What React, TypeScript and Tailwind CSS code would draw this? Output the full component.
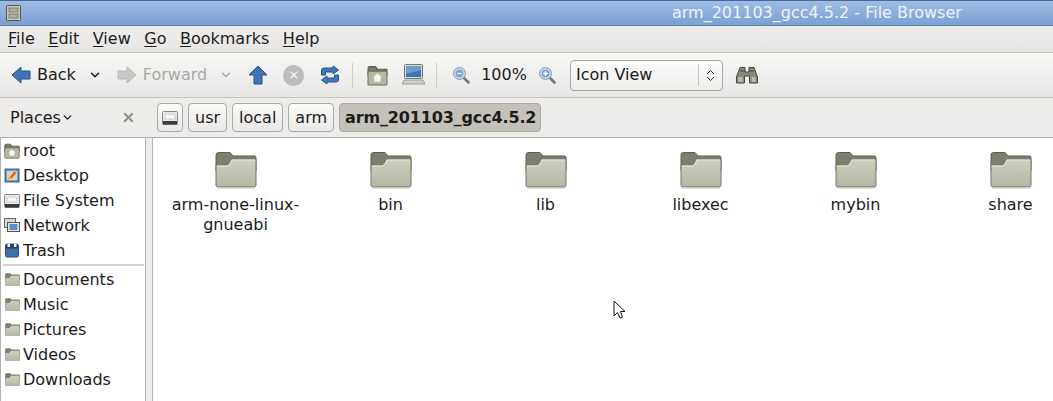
import { useId } from 'react';
import { ChevronDown, ChevronsUpDown, X } from 'lucide-react';

const menus = [
  ['F', 'ile'],
  ['E', 'dit'],
  ['V', 'iew'],
  ['G', 'o'],
  ['B', 'ookmarks'],
  ['H', 'elp'],
];

const folders = ['arm-none-linux-gnueabi', 'bin', 'lib', 'libexec', 'mybin', 'share'];

function FolderIcon({ size = 42 }: { size?: number }) {
  const gradient = useId();
  return (
    <svg width={size} height={(size * 38) / 42} viewBox="0 0 42 38">
      <defs>
        <linearGradient id={gradient} x1="0" y1="0" x2="0" y2="1">
          <stop offset="0" stopColor="#cfd0c0" />
          <stop offset="1" stopColor="#b4b5a3" />
        </linearGradient>
      </defs>
      <path d="M1 4 Q1 1.5 3.5 1.5 H15 L18 5 H40 Q41 5 41 7 V20 H1 Z" fill="#7d7d70" stroke="#5f5f55" />
      <path d="M1 14 H12 Q14 14 16 8 H40 Q41 8 41 9 V34 Q41 36 39 36 H3 Q1 36 1 34 Z" fill={`url(#${gradient})`} stroke="#77776a" />
      <path d="M2 15 H12.5 Q15 15 17 9 H40" fill="none" stroke="#e8e9df" />
      <path d="M2 37 H40" stroke="#c4c4be" />
    </svg>
  );
}

function DriveIcon() {
  return (
    <svg width="16" height="14" viewBox="0 0 16 14">
      <rect x="0.5" y="0.5" width="15" height="13" rx="1" fill="#e8e8e8" stroke="#8a8a8a" />
      <path d="M2 8 L4 3 H12 L14 8 Z" fill="#f6f6f6" stroke="#cfcfcf" />
      <rect x="1" y="10" width="14" height="3.5" fill="#3a3a3a" />
    </svg>
  );
}

function HomeFolderIcon({ size = 20 }: { size?: number }) {
  return (
    <svg width={size} height={size} viewBox="0 0 20 20">
      <path d="M1 3 Q1 1.5 2.5 1.5 H8 L10 4 H19 V10 H1 Z" fill="#77776a" stroke="#5a5a50" />
      <rect x="1" y="6" width="18" height="13" rx="1" fill="#b5b6a3" stroke="#6f6f63" />
      <path d="M10 8 L14.5 12 H13 V16 H7 V12 H5.5 Z" fill="#f4f4f0" />
    </svg>
  );
}

function SidebarIcon({ name }: { name: string }) {
  if (name === 'root') return <HomeFolderIcon size={16} />;
  if (name === 'File System') return <DriveIcon />;
  if (name === 'Desktop')
    return (
      <svg width="16" height="15" viewBox="0 0 16 15">
        <rect x="1.5" y="1.5" width="13" height="12" fill="#d9d4b8" stroke="#3a6ea8" strokeWidth="2" />
        <path d="M6.5 10 L11.5 4" stroke="#d9541e" strokeWidth="2" />
        <path d="M4.5 11 L6.5 9" stroke="#f0b030" strokeWidth="2" />
      </svg>
    );
  if (name === 'Network')
    return (
      <svg width="16" height="15" viewBox="0 0 16 15">
        <rect x="0.5" y="0.5" width="11" height="9" fill="#d8d8d8" stroke="#666" />
        <rect x="3.5" y="4.5" width="12" height="9" fill="#e4e4e4" stroke="#555" />
        <rect x="5.5" y="6" width="8" height="6" fill="#5c8fc4" />
      </svg>
    );
  if (name === 'Trash')
    return (
      <svg width="14" height="15" viewBox="0 0 14 15">
        <rect x="0.5" y="1" width="13" height="13" rx="1.5" fill="#3e6fa8" stroke="#2a4f80" />
        <rect x="1" y="1.5" width="12" height="4" fill="#2d3f55" />
        <rect x="2.5" y="0.5" width="2.5" height="3.5" fill="#eef" />
        <rect x="9" y="0.5" width="2.5" height="3.5" fill="#eef" />
      </svg>
    );
  return <FolderIcon size={15} />;
}

function ArrowIcon({ dir, color, stroke }: { dir: 'left' | 'right' | 'up'; color: string; stroke: string }) {
  const d =
    dir === 'left'
      ? 'M1 10 L10 2 V6 H19 V14 H10 V18 Z'
      : dir === 'right'
        ? 'M19 10 L10 2 V6 H1 V14 H10 V18 Z'
        : 'M10 1 L19 10 H14 V19 H6 V10 H1 Z';
  return (
    <svg width="20" height="20" viewBox="0 0 20 20">
      <path d={d} fill={color} stroke={stroke} strokeLinejoin="round" />
    </svg>
  );
}

function ZoomIcon({ plus }: { plus?: boolean }) {
  return (
    <svg width="18" height="18" viewBox="0 0 18 18">
      <path d="M11 11 L16.5 16.5" stroke="#777" strokeWidth="2.5" strokeLinecap="round" />
      <circle cx="7.5" cy="7.5" r="6" fill="#c5d6ea" stroke="#8a9bb0" />
      <circle cx="7.5" cy="7.5" r="3.8" fill="#7a9fcc" />
      <path d="M5.2 7.5 H9.8" stroke="#fff" strokeWidth="1.5" />
      {plus && <path d="M7.5 5.2 V9.8" stroke="#fff" strokeWidth="1.5" />}
    </svg>
  );
}

function Crumb({ children, active, icon }: { children: React.ReactNode; active?: boolean; icon?: boolean }) {
  return (
    <div
      className={`flex h-[29px] items-center rounded-[4px] border border-[#a8a8a4] ${
        active
          ? 'bg-[#c4c0ba] pl-[5px] pr-[4px] font-bold tracking-[-0.15px]'
          : 'bg-gradient-to-b from-[#fbfbfa] to-[#e9e8e6]'
      } ${icon ? 'px-[4px]' : ''} ${!active && !icon ? 'px-[6px]' : ''}`}
    >
      {children}
    </div>
  );
}

export default function App() {
  return (
    <div className="flex h-[401px] w-[1053px] flex-col overflow-hidden bg-[#edeceb] font-['DejaVu_Sans',sans-serif] text-[16px] text-[#1c1c1c]">
      {/* Title bar */}
      <div className="relative flex h-[26px] shrink-0 items-center border-y border-t-[#4a6a96] border-b-[#5f85b8] bg-gradient-to-b from-[#9dbde4] to-[#7ba0d0] pl-[6px]">
        <svg width="15" height="16" viewBox="0 0 15 16">
          <rect x="0.5" y="0.5" width="14" height="15" rx="1" fill="#c9c9bd" stroke="#55554c" />
          <rect x="3" y="3" width="9" height="4" fill="#b0b0a2" stroke="#66665c" strokeWidth="0.7" />
          <rect x="3" y="9" width="9" height="4" fill="#b0b0a2" stroke="#66665c" strokeWidth="0.7" />
        </svg>
        <span className="ml-[651px] whitespace-nowrap text-[#eef3fa]">arm_201103_gcc4.5.2 - File Browser</span>
      </div>

      {/* Menu bar */}
      <div className="flex h-[27px] shrink-0 items-center gap-[13.5px] border-b border-[#c4c3c0] bg-gradient-to-b from-[#efeeed] to-[#e7e6e4] pl-[8px]">
        {menus.map(([key, rest]) => (
          <span key={key}>
            <span className="underline underline-offset-2">{key}</span>
            {rest}
          </span>
        ))}
      </div>

      {/* Toolbar */}
      <div className="flex h-[45px] shrink-0 items-center border-b border-[#c4c3c0] bg-gradient-to-b from-[#f7f7f6] to-[#e8e7e5] pl-[11px]">
        <ArrowIcon dir="left" color="#3f73b4" stroke="#2a5286" />
        <span className="ml-[6px]">Back</span>
        <ChevronDown size={14} strokeWidth={2.5} className="ml-[12px]" />
        <div className="ml-[15px]">
          <ArrowIcon dir="right" color="#c8c8c6" stroke="#b8b8b6" />
        </div>
        <span className="ml-[6px] text-[#a9a8a6]">Forward</span>
        <ChevronDown size={14} strokeWidth={2.5} className="ml-[12px] text-[#a9a8a6]" />
        <div className="ml-[15px]">
          <ArrowIcon dir="up" color="#3f73b4" stroke="#2a5286" />
        </div>
        <div className="ml-[15px] flex h-[21px] w-[21px] items-center justify-center rounded-full bg-[#bdbcba]">
          <X size={12} strokeWidth={3} className="text-[#eeeeec]" />
        </div>
        <svg width="20" height="20" viewBox="0 0 20 20" className="ml-[16px]">
          <path d="M1.5 10 V5 Q1.5 3 4 3 H13 V1 L18.5 5 L13 9 V7 H5.5 V10 Z" fill="#3f78bd" stroke="#24528c" />
          <path d="M18.5 10 V15 Q18.5 17 16 17 H7 V19 L1.5 15 L7 11 V13 H14.5 V10 Z" fill="#3f78bd" stroke="#24528c" />
        </svg>
        <div className="ml-[12px] h-[25px] w-px bg-[#cfcecb]" />
        <div className="ml-[14px]">
          <HomeFolderIcon size={21} />
        </div>
        <svg width="23" height="22" viewBox="0 0 23 22" className="ml-[14px]">
          <rect x="2.5" y="0.5" width="18" height="14" rx="1" fill="#d8d8d6" stroke="#77776f" />
          <rect x="4" y="2" width="15" height="11" fill="#3e72b0" />
          <path d="M4 2 H19 V6 L4 10 Z" fill="#6d9bd0" />
          <path d="M2 16 H21 L23 20 H0 Z" fill="#cfcfcb" stroke="#85857d" strokeWidth="0.7" />
        </svg>
        <div className="ml-[11px] h-[25px] w-px bg-[#cfcecb]" />
        <div className="ml-[15px]">
          <ZoomIcon />
        </div>
        <span className="ml-[11px]">100%</span>
        <div className="ml-[11px]">
          <ZoomIcon plus />
        </div>
        <div className="ml-[14px] flex h-[31px] w-[153px] items-center rounded-[4px] border border-[#a8a8a4] bg-gradient-to-b from-[#fbfbfa] to-[#eeedeb] pl-[5px]">
          <span className="flex-1">Icon View</span>
          <div className="flex h-[22px] w-[24px] items-center justify-center border-l border-[#c8c7c4]">
            <ChevronsUpDown size={15} strokeWidth={1.5} />
          </div>
        </div>
        <svg width="22" height="18" viewBox="0 0 22 18" className="ml-[13px]">
          <path d="M4 1.5 H9 V6 H13 V1.5 H18 L21.5 11 V17 H13.5 V10 H8.5 V17 H0.5 V11 Z" fill="#8a8a7c" stroke="#45453e" strokeLinejoin="round" />
          <rect x="2.5" y="11" width="4" height="5" fill="#bcbcae" />
          <rect x="15.5" y="11" width="4" height="5" fill="#bcbcae" />
          <path d="M4 5 H9 M13 5 H18" stroke="#45453e" />
        </svg>
      </div>

      {/* Location row */}
      <div className="flex h-[40px] shrink-0 items-center border-b border-[#b4b3b0]">
        <div className="flex w-[157px] items-center pl-[10px]">
          <span>Places</span>
          <ChevronDown size={13} strokeWidth={2.5} />
          <X size={15} strokeWidth={3} className="ml-[47px] text-[#8f8f8c]" />
        </div>
        <div className="flex items-center gap-[5px]">
          <Crumb icon>
            <DriveIcon />
          </Crumb>
          <Crumb>usr</Crumb>
          <Crumb>local</Crumb>
          <Crumb>arm</Crumb>
          <Crumb active>arm_201103_gcc4.5.2</Crumb>
        </div>
      </div>

      {/* Body */}
      <div className="flex min-h-0 flex-1">
        <div className="w-[146px] shrink-0 border-x border-[#b4b3b0] bg-white pl-[2px]">
          {['root', 'Desktop', 'File System', 'Network', 'Trash'].map((name) => (
            <SidebarRow key={name} name={name} />
          ))}
          <div className="my-[1px] mr-[1px] h-[2px] bg-[#d6d5d2]" />
          {['Documents', 'Music', 'Pictures', 'Videos', 'Downloads'].map((name) => (
            <SidebarRow key={name} name={name} />
          ))}
        </div>
        <div className="ml-[6px] flex flex-1 border-l border-[#b4b3b0] bg-white pl-[5px] pt-[13px]">
          {folders.map((name) => (
            <div key={name} className="flex w-[155px] shrink-0 flex-col items-center">
              <FolderIcon />
              <span className="mt-[6px] w-[140px] break-words text-center leading-[20px]">
                {name === 'arm-none-linux-gnueabi' ? (
                  <>
                    arm-none-linux-
                    <br />
                    gnueabi
                  </>
                ) : (
                  name
                )}
              </span>
            </div>
          ))}
        </div>
      </div>

      {/* Mouse pointer */}
      <svg width="14" height="20" viewBox="0 0 14 20" className="absolute left-[613px] top-[300px]">
        <path d="M1 1 V16 L4.5 12.5 L7 18 L9.5 17 L7.5 11.5 H12 Z" fill="#fff" stroke="#111" />
      </svg>
    </div>
  );
}

function SidebarRow({ name }: { name: string }) {
  return (
    <div className="flex h-[25px] items-center">
      <div className="flex w-[18px] shrink-0 items-center justify-center">
        <SidebarIcon name={name} />
      </div>
      <span className="ml-[2px]">{name}</span>
    </div>
  );
}
